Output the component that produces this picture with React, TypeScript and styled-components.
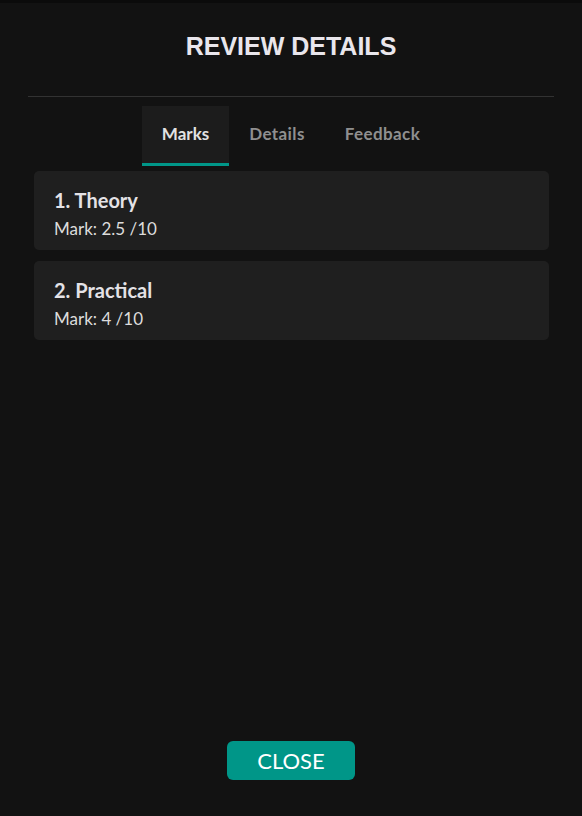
import React, { useState } from "react";
import styled, { createGlobalStyle } from "styled-components";

const Global = createGlobalStyle`
  html, body { margin: 0; padding: 0; background: #121212; }
  body { font-family: "Lato", "Noto Sans", sans-serif; }
  * { box-sizing: border-box; }
`;

const Modal = styled.div`
  min-height: 100vh;
  display: flex;
  flex-direction: column;
  background: #121212;
  border-top: 3px solid #0b0b0b;
`;

const Header = styled.header`
  margin: 0 28px;
  height: 94px;
  display: flex;
  align-items: center;
  justify-content: center;
  border-bottom: 1px solid #323232;
`;

const Title = styled.h1`
  margin: 0 0 6px;
  font-family: "Liberation Sans", Arial, sans-serif;
  font-weight: 700;
  font-size: 25px;
  color: #e9e6ec;
`;

const TabBar = styled.nav`
  display: flex;
  justify-content: center;
  margin-top: 9px;
`;

const Tab = styled.button<{ $active?: boolean }>`
  height: 60px;
  padding: 0 20px 3px;
  border: none;
  border-bottom: 3px solid ${(p) => (p.$active ? "#009688" : "transparent")};
  background: ${(p) => (p.$active ? "#1c1c1c" : "transparent")};
  color: ${(p) => (p.$active ? "#e2e2e2" : "#8f8f8f")};
  font-family: "Lato", sans-serif;
  font-size: 17px;
  font-weight: 700;
  letter-spacing: ${(p) => (p.$active ? "0" : "0.4px")};
  cursor: pointer;
`;

const List = styled.section`
  flex: 1;
  display: flex;
  flex-direction: column;
  gap: 11px;
  padding: 5px 33px 0 34px;
`;

const Card = styled.article`
  height: 79px;
  background: #1f1f1f;
  border-radius: 5px;
  padding: 17px 20px 0;
`;

const CardTitle = styled.h2`
  margin: 0;
  font-size: 20px;
  font-weight: 700;
  line-height: 24px;
  color: #e4e2e6;
`;

const CardMark = styled.p`
  margin: 7px 0 0;
  font-size: 17px;
  line-height: 20px;
  color: #dcdcdc;
`;

const Footer = styled.footer`
  display: flex;
  justify-content: center;
  padding-bottom: 36px;
`;

const CloseButton = styled.button`
  width: 128px;
  height: 39px;
  border: none;
  border-radius: 6px;
  background: #009688;
  color: #ffffff;
  font-family: "Lato", sans-serif;
  font-size: 22px;
  cursor: pointer;
`;

const tabs = ["Marks", "Details", "Feedback"];
const marks = [
  { title: "1. Theory", mark: "2.5 /10" },
  { title: "2. Practical", mark: "4 /10" },
];

export default function App() {
  const [active, setActive] = useState("Marks");
  return (
    <>
      <Global />
      <Modal>
        <Header>
          <Title>REVIEW DETAILS</Title>
        </Header>
        <TabBar>
          {tabs.map((t) => (
            <Tab key={t} $active={t === active} onClick={() => setActive(t)}>
              {t}
            </Tab>
          ))}
        </TabBar>
        <List>
          {marks.map((m) => (
            <Card key={m.title}>
              <CardTitle>{m.title}</CardTitle>
              <CardMark>Mark: {m.mark}</CardMark>
            </Card>
          ))}
        </List>
        <Footer>
          <CloseButton>CLOSE</CloseButton>
        </Footer>
      </Modal>
    </>
  );
}
